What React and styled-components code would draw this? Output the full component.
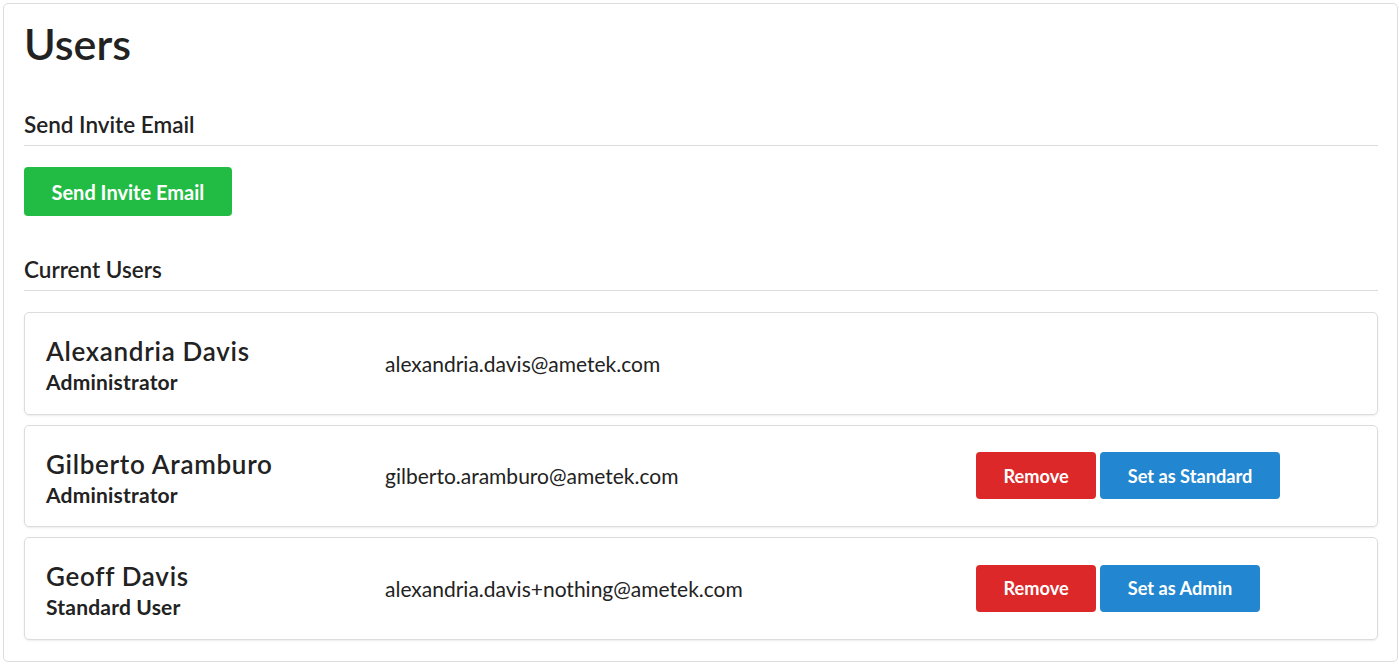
import React from "react";
import styled, { createGlobalStyle } from "styled-components";

const GlobalStyle = createGlobalStyle`
  body {
    margin: 0;
    background: #fff;
    font-family: Lato, "Open Sans", sans-serif;
    color: #222;
  }
`;

const users = [
  { name: "Alexandria Davis", role: "Administrator", email: "alexandria.davis@ametek.com", actions: [] },
  {
    name: "Gilberto Aramburo",
    role: "Administrator",
    email: "gilberto.aramburo@ametek.com",
    actions: ["Remove", "Set as Standard"],
  },
  {
    name: "Geoff Davis",
    role: "Standard User",
    email: "alexandria.davis+nothing@ametek.com",
    actions: ["Remove", "Set as Admin"],
  },
];

export default function App() {
  return (
    <Page>
      <GlobalStyle />
      <Panel>
        <Title>Users</Title>
        <SectionTitle>Send Invite Email</SectionTitle>
        <Button $variant="green">Send Invite Email</Button>
        <SectionTitle>Current Users</SectionTitle>
        <UserList>
          {users.map((u) => (
            <UserCard key={u.email}>
              <NameCol>
                <Name>{u.name}</Name>
                <Role>{u.role}</Role>
              </NameCol>
              <Email>{u.email}</Email>
              <Actions>
                {u.actions.map((a) => (
                  <Button key={a} $variant={a === "Remove" ? "red" : "blue"} $small>
                    {a}
                  </Button>
                ))}
              </Actions>
            </UserCard>
          ))}
        </UserList>
      </Panel>
    </Page>
  );
}

const Page = styled.div`
  padding: 3px 1px 1px 3px;
`;

const Panel = styled.div`
  border: 1px solid #dcdcdc;
  border-radius: 5px;
  padding: 14px 19px 21px 20px;
`;

const Title = styled.h1`
  margin: 0 0 41px;
  font-size: 43px;
  font-weight: 600;
  line-height: 52px;
`;

const SectionTitle = styled.h3`
  margin: 0 0 21px;
  padding-bottom: 7px;
  font-size: 22.5px;
  font-weight: 600;
  line-height: 27px;
  border-bottom: 1px solid #dcdcdc;
`;

const colors = { green: "#22bb44", red: "#dc2828", blue: "#2386d0" };

const Button = styled.button`
  display: inline-block;
  border: none;
  border-radius: 4px;
  background: ${(p) => colors[p.$variant]};
  color: #fff;
  font-family: Lato, sans-serif;
  font-weight: 700;
  font-size: ${(p) => (p.$small ? "18.2px" : "20px")};
  height: ${(p) => (p.$small ? "47px" : "49px")};
  padding: ${(p) => (p.$small ? "0 27.5px" : "0 27.5px")};
  margin-bottom: ${(p) => (p.$small ? "0" : "40px")};
  cursor: pointer;
`;

const UserList = styled.div`
  display: flex;
  flex-direction: column;
  gap: 10px;
`;

const UserCard = styled.div`
  display: grid;
  grid-template-columns: 339px 591px 1fr;
  align-items: center;
  height: 102.5px;
  box-sizing: border-box;
  padding: 0 21px;
  border: 1px solid #dcdcdc;
  border-radius: 5px;
  box-shadow: 0 1px 2px rgba(0, 0, 0, 0.08);
`;

const NameCol = styled.div`
  display: flex;
  flex-direction: column;
`;

const Name = styled.div`
  font-size: 26px;
  font-weight: 600;
  letter-spacing: 0.7px;
  line-height: 38px;
`;

const Role = styled.div`
  font-size: 21px;
  font-weight: 700;
  letter-spacing: 0.2px;
  line-height: 24px;
`;

const Email = styled.div`
  font-size: 21px;
`;

const Actions = styled.div`
  display: flex;
  gap: 4px;
`;
